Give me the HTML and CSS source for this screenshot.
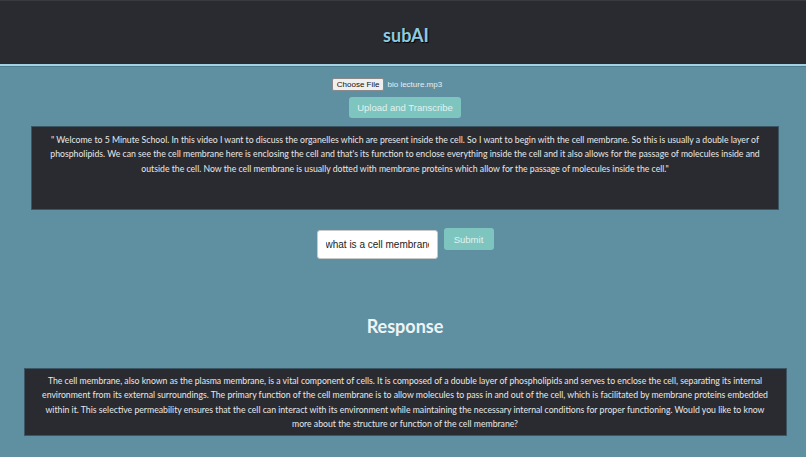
FILE: index.html
```html
<!DOCTYPE html>
<html>
<head>
<meta charset="utf-8">
<link rel="stylesheet" href="styles.css">
</head>
<body>
<header class="topbar">
  <h1 class="brand">subAI</h1>
</header>
<main class="main">
  <form class="upload">
    <div class="file-row">
      <span class="file-btn">Choose File</span>
      <span class="file-name">bio lecture.mp3</span>
    </div>
    <button type="button" class="btn btn-upload">Upload and Transcribe</button>
  </form>
  <section class="panel transcript">
    <p>" Welcome to 5 Minute School. In this video I want to discuss the organelles which are present inside the cell. So I want to begin with the cell membrane. So this is usually a double layer of phospholipids. We can see the cell membrane here is enclosing the cell and that's its function to enclose everything inside the cell and it also allows for the passage of molecules inside and outside the cell. Now the cell membrane is usually dotted with membrane proteins which allow for the passage of molecules inside the cell."</p>
  </section>
  <form class="ask">
    <input class="question" type="text" value="what is a cell membrane">
    <button type="button" class="btn btn-submit">Submit</button>
  </form>
  <h2 class="response-title">Response</h2>
  <section class="panel response">
    <p>The cell membrane, also known as the plasma membrane, is a vital component of cells. It is composed of a double layer of phospholipids and serves to enclose the cell, separating its internal environment from its external surroundings. The primary function of the cell membrane is to allow molecules to pass in and out of the cell, which is facilitated by membrane proteins embedded within it. This selective permeability ensures that the cell can interact with its environment while maintaining the necessary internal conditions for proper functioning. Would you like to know more about the structure or function of the cell membrane?</p>
  </section>
</main>
</body>
</html>
```

FILE: styles.css
```css
html, body {
  margin: 0;
  padding: 0;
}
body {
  background: #5f90a2;
  font-family: "Lato", "Liberation Sans", sans-serif;
  height: 457px;
  overflow: hidden;
}
.topbar {
  background: #2a2b30;
  border-top: 1px solid #3a3b40;
  border-bottom: 2px solid #a4d2e2;
  box-shadow: 0 1px 0 #4d7c8e;
  box-sizing: border-box;
  height: 66px;
  display: flex;
  align-items: center;
  justify-content: center;
}
.brand {
  margin: 0;
  padding-top: 5px;
  padding-left: 6px;
  font-size: 18px;
  font-weight: 700;
  color: #8ccbe2;
  text-shadow: 1px 1px 1px #000;
}
.main {
  display: flex;
  flex-direction: column;
  align-items: center;
  padding-left: 4px;
}
.upload {
  display: flex;
  flex-direction: column;
  align-items: center;
  margin-top: 12px;
}
.file-row {
  display: flex;
  align-items: center;
  gap: 3px;
  margin-left: -36px;
  font-family: "Liberation Sans", Arial, sans-serif;
  font-size: 8px;
}
.file-btn {
  background: #efefef;
  border: 1px solid #8a8a8a;
  border-radius: 2px;
  color: #111;
  padding: 1px 4px;
  line-height: 9px;
}
.file-name {
  color: #e4eef2;
}
.btn {
  font-family: "Liberation Sans", Arial, sans-serif;
  background: #7ec5bf;
  color: #e0f2f0;
  border: none;
  border-radius: 3px;
  cursor: pointer;
}
.btn-upload {
  margin-top: 6px;
  width: 112px;
  height: 21px;
  font-size: 9.5px;
}
.panel {
  background: #2a2b30;
  border: 1px solid #3d5663;
  box-sizing: border-box;
  color: #e8e8e8;
  text-align: center;
  font-size: 8.7px;
  line-height: 14.3px;
}
.panel p {
  margin: 0;
}
.transcript {
  width: 748px;
  height: 84px;
  margin-top: 8px;
  padding: 6px 10px;
}
.ask {
  display: flex;
  align-items: flex-start;
  gap: 6px;
  margin-top: 18px;
}
.question {
  width: 121px;
  height: 29px;
  box-sizing: border-box;
  margin-top: 2px;
  border: 1px solid #c9c9c9;
  border-radius: 3px;
  padding: 0 8px;
  font-family: "Liberation Sans", Arial, sans-serif;
  font-size: 10px;
  color: #222;
  background: #fff;
}
.btn-submit {
  width: 50px;
  height: 22px;
  font-size: 9.5px;
}
.response-title {
  margin: 56px 0 0 0;
  font-size: 18px;
  font-weight: 700;
  color: #eef4f6;
  line-height: 22px;
}
.response {
  width: 763px;
  height: 68px;
  margin-top: 31px;
  padding: 5px 15px;
}
```
